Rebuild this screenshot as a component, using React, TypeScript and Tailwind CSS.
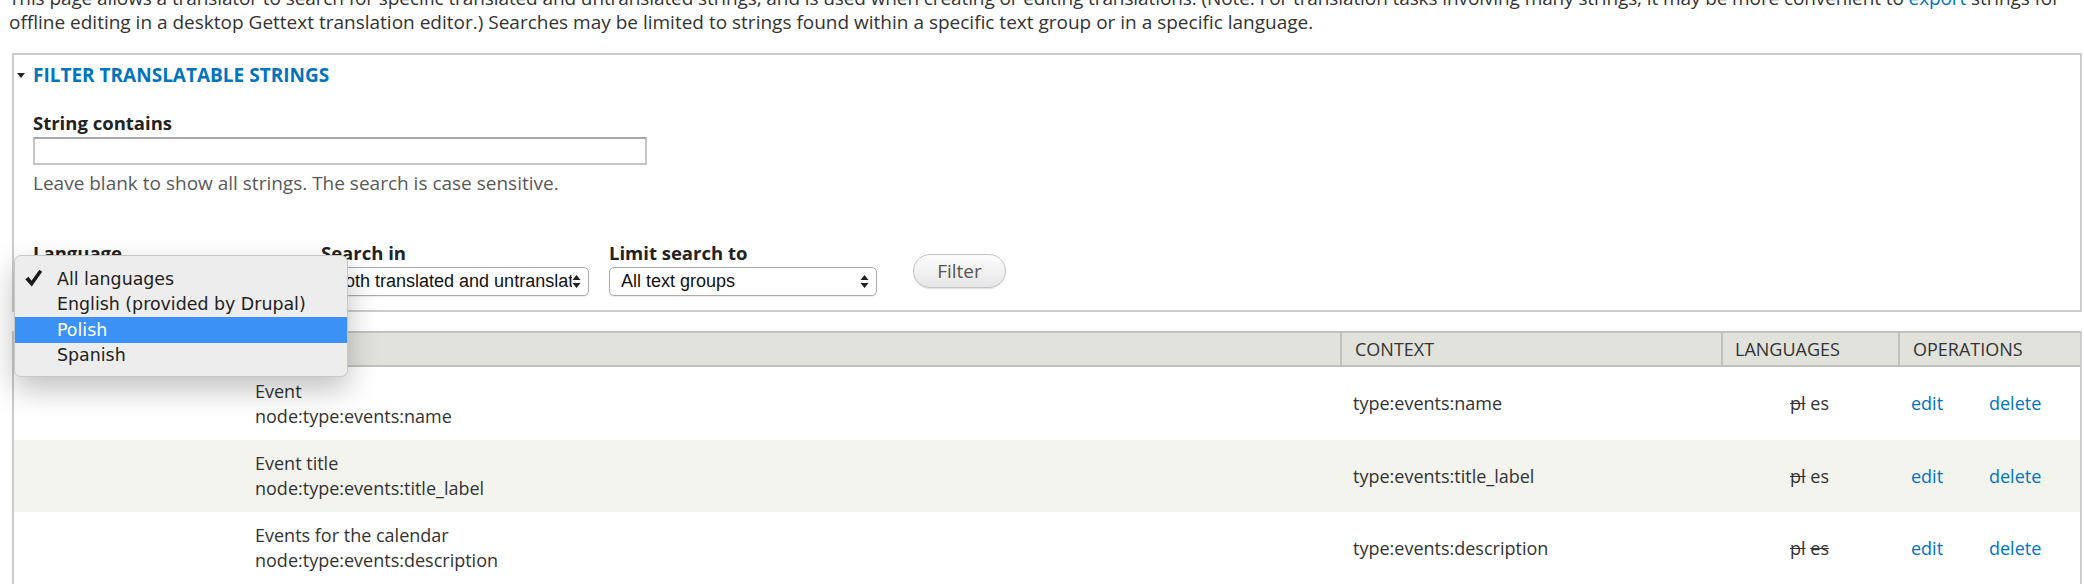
import React from "react";

function Arrows() {
  return (
    <svg width="9" height="15" viewBox="0 0 9 15" className="shrink-0">
      <path d="M4.5 1 L8.5 6 H0.5 Z M4.5 14 L8.5 9 H0.5 Z" fill="#222" />
    </svg>
  );
}

function Select({ value }: { value: string }) {
  return (
    <div className="mt-[2px] flex h-[29px] w-[268px] items-center rounded-[5px] border border-[#ababab] bg-white pl-[11px] pr-[7px] shadow-[0_1px_1px_rgba(0,0,0,0.08)] font-['Liberation_Sans',Arial,sans-serif] text-[18px] text-[#111]">
      <span className="min-w-0 flex-1 overflow-hidden whitespace-nowrap">{value}</span>
      <Arrows />
    </div>
  );
}

const rows = [
  { src: "Event", loc: "node:type:events:name", ctx: "type:events:name", esStruck: false, h: "h-[73px]", bg: "bg-white" },
  { src: "Event title", loc: "node:type:events:title_label", ctx: "type:events:title_label", esStruck: false, h: "h-[72px]", bg: "bg-[#f3f4ee]" },
  { src: "Events for the calendar", loc: "node:type:events:description", ctx: "type:events:description", esStruck: true, h: "h-[72px]", bg: "bg-white" },
];

export default function App() {
  return (
    <div className="relative h-[584px] w-[2084px] overflow-hidden bg-white font-['Open_Sans',sans-serif] text-[#333]">
      <p className="-mt-[14px] ml-[9px] whitespace-nowrap text-[19px] leading-[24px]">
        <span className="tracking-[-0.1px]">
          This page allows a translator to search for specific translated and untranslated strings, and is used when creating or editing translations. (Note: For translation tasks involving many strings, it may be more convenient to{" "}
          <a className="text-[#0074bd]">export</a> strings for
        </span>
        <br />
        offline editing in a desktop Gettext translation editor.) Searches may be limited to strings found within a specific text group or in a specific language.
      </p>

      <div className="ml-[12px] mt-[19px] w-[2070px] border-2 border-[#cccccc] pb-[14px] pt-[8px]">
        <div className="flex h-[24px] items-center pl-[3px]">
          <svg width="8" height="5" viewBox="0 0 8 5">
            <path d="M0 0 H8 L4 5 Z" fill="#222" />
          </svg>
          <span className="ml-[8px] text-[19px] font-bold uppercase leading-[24px] text-[#0074bd]">
            Filter translatable strings
          </span>
        </div>
        <div className="pl-[19px]">
          <div className="mt-[24px] text-[18.5px] font-bold leading-[24px] text-[#222]">String contains</div>
          <div className="mt-[2px] h-[28px] w-[614px] border-2 border-[#c6c6c6] border-t-[#a9a9a9] bg-white" />
          <div className="mt-[6px] text-[19px] leading-[24px] text-[#595959]">
            Leave blank to show all strings. The search is case sensitive.
          </div>
          <div className="mt-[46px] flex items-start gap-[20px]">
            <div>
              <div className="text-[18.5px] font-bold leading-[24px] text-[#222]">Language</div>
              <Select value="All languages" />
            </div>
            <div>
              <div className="text-[18.5px] font-bold leading-[24px] text-[#222]">Search in</div>
              <Select value="Both translated and untranslated strings" />
            </div>
            <div>
              <div className="text-[18.5px] font-bold leading-[24px] text-[#222]">Limit search to</div>
              <Select value="All text groups" />
            </div>
            <button className="ml-[16px] mt-[13px] h-[34px] w-[93px] rounded-full border border-[#c4c4c4] bg-gradient-to-b from-[#fdfdfd] to-[#e6e6e6] text-[19px] text-[#555] shadow-[0_1px_1px_rgba(0,0,0,0.12)]">
              Filter
            </button>
          </div>
        </div>
      </div>

      <div className="ml-[12px] mt-[19px] w-[2070px] border-x-2 border-[#cccccc] text-[18px]">
        <div className="grid h-[36px] grid-cols-[231px_1095px_381px_177px_78px_104px] items-center border-y-2 border-[#c2c2bd] bg-[#e1e2dc] uppercase">
          <div className="pl-[11px]">Text group</div>
          <div className="pl-[10px]">String</div>
          <div className="flex h-full items-center border-l-2 border-[#c2c2bd] pl-[13px]">Context</div>
          <div className="flex h-full items-center border-l-2 border-[#c2c2bd] pl-[12px]">Languages</div>
          <div className="col-span-2 flex h-full items-center border-l-2 border-[#c2c2bd] pl-[13px]">Operations</div>
        </div>
        {rows.map((r) => (
          <div
            key={r.loc}
            className={`grid grid-cols-[231px_1095px_381px_177px_78px_104px] items-center ${r.h} ${r.bg}`}
          >
            <div />
            <div className="pl-[10px] leading-[25px]">
              <div>{r.src}</div>
              <div>{r.loc}</div>
            </div>
            <div className="pl-[13px]">{r.ctx}</div>
            <div className="text-center">
              <span className="line-through">pl</span>{" "}
              <span className={r.esStruck ? "line-through" : ""}>es</span>
            </div>
            <div className="pl-[13px] text-[#0074bd]">edit</div>
            <div className="pl-[13px] text-[#0074bd]">delete</div>
          </div>
        ))}
      </div>

      <div className="absolute left-[14px] top-[255px] w-[334px] rounded-[7px] border border-[#c7c7c7] bg-[#ededed] pb-[8px] pt-[10px] font-['DejaVu_Sans',sans-serif] text-[17.4px] text-[#222] shadow-[0_12px_30px_rgba(0,0,0,0.25)]">
        <div className="relative flex h-[25.5px] items-center pl-[42px]">
          <svg width="19" height="19" viewBox="0 0 18 18" className="absolute left-[9px] top-[3px]">
            <path d="M1.2 9.6 L4.3 7.3 L7.1 11.2 L14.6 0.8 L17.2 2.7 L7.4 16.6 Z" fill="#1a1a1a" />
          </svg>
          All languages
        </div>
        <div className="flex h-[25.5px] items-center pl-[42px]">English (provided by Drupal)</div>
        <div className="flex h-[25.5px] items-center bg-[#3b91f5] pl-[42px] text-white">Polish</div>
        <div className="flex h-[25.5px] items-center pl-[42px]">Spanish</div>
      </div>
    </div>
  );
}
